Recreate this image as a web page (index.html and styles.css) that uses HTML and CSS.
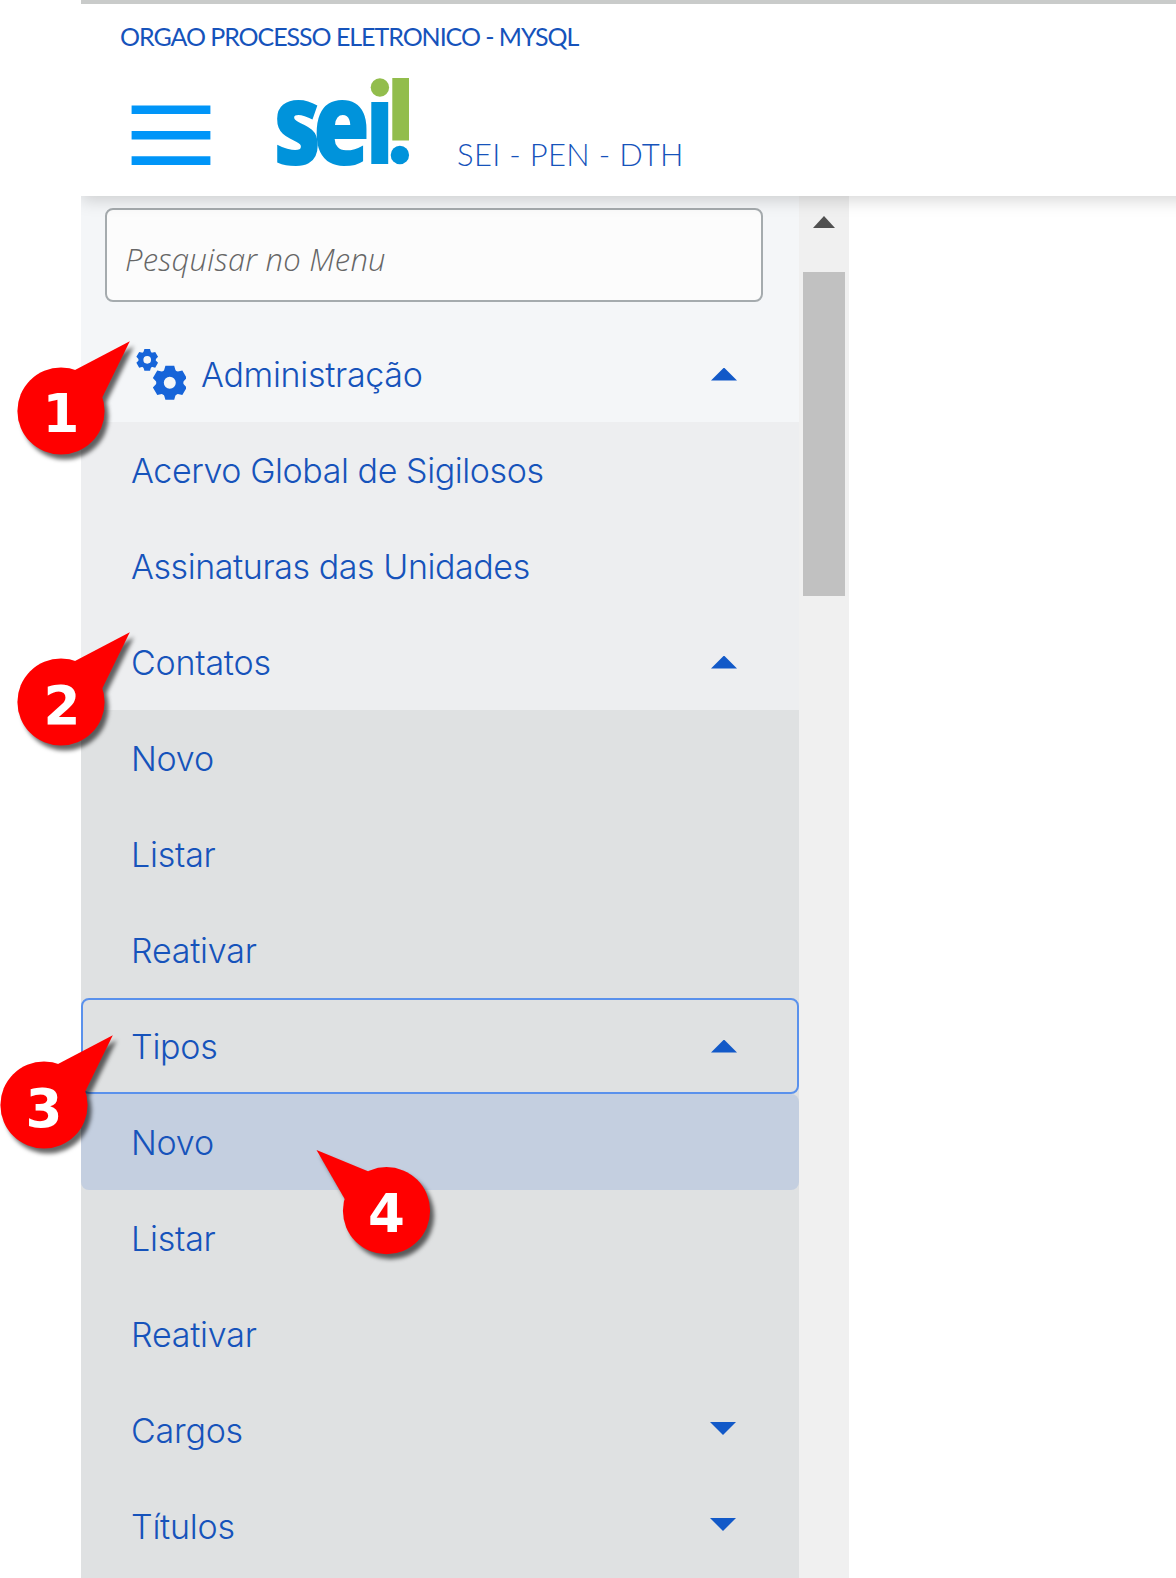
FILE: index.html
```html
<!DOCTYPE html>
<html lang="pt-BR">
<head>
<meta charset="utf-8">
<title>SEI - PEN - DTH</title>
<link rel="stylesheet" href="styles.css">
</head>
<body>
<div class="app">
  <header class="header">
    <div class="org">ORGAO PROCESSO ELETRONICO - MYSQL</div>
    <div class="brand">
      <svg class="burger" viewBox="0 0 79 62" width="79" height="62">
        <path fill="#0095f8" d="M-.4 1.4H78.4V10H-.4zM-.4 27H78.4V35.6H-.4zM-.4 52.3H78.4V61H-.4z"/>
      </svg>
      <svg class="logo" viewBox="0 0 134 92" width="134" height="92">
        <g fill="#0093db">
          <text class="logo-text" transform="translate(-2.8 89.3) scale(.81 1)">se</text>
          <path d="M95.3 26H112.2V88H95.3z"/>
          <circle cx="123.9" cy="79" r="9.2"/>
        </g>
        <g fill="#92bd4c">
          <circle cx="103.9" cy="11.5" r="9.2"/>
          <path d="M116.3 2H133V64.4H116.3z"/>
        </g>
      </svg>
      <span class="system">SEI - PEN - DTH</span>
    </div>
  </header>
  <div class="body">
    <nav class="menu">
      <div class="search"><input class="search-input" type="text" placeholder="Pesquisar no Menu"></div>
      <a class="item root">
        <svg class="gears" viewBox="0 0 50 52" width="50" height="52">
          <defs>
            <g id="gear">
              <circle r="9.8" fill="none" stroke="#1664d9" stroke-width="7.6"/>
              <path id="teeth" fill="#1664d9" d="M-6-11.5L-4.4-17H4.4L6-11.5zM-6 11.5L-4.4 17H4.4L6 11.5z"/>
              <use href="#teeth" transform="rotate(60)"/>
              <use href="#teeth" transform="rotate(120)"/>
            </g>
          </defs>
          <use href="#gear" transform="translate(11.2 11.8) scale(.64)"/>
          <use href="#gear" transform="translate(33.8 34.8)"/>
        </svg>
        <span class="label admin">Administração</span><i class="caret up"></i>
      </a>
      <div class="level2">
        <a class="item"><span class="label long">Acervo Global de Sigilosos</span></a>
        <a class="item"><span class="label long">Assinaturas das Unidades</span></a>
        <a class="item"><span class="label">Contatos</span><i class="caret up"></i></a>
      </div>
      <div class="level3">
        <a class="item"><span class="label">Novo</span></a>
        <a class="item"><span class="label">Listar</span></a>
        <a class="item"><span class="label">Reativar</span></a>
        <a class="item focus"><span class="label">Tipos</span><i class="caret up"></i></a>
        <a class="item hover"><span class="label">Novo</span></a>
        <a class="item"><span class="label">Listar</span></a>
        <a class="item"><span class="label">Reativar</span></a>
        <a class="item"><span class="label">Cargos</span><i class="caret down"></i></a>
        <a class="item"><span class="label">Títulos</span><i class="caret down"></i></a>
      </div>
    </nav>
    <div class="scrollbar"><i class="arrow"></i><div class="thumb"></div></div>
  </div>
</div>

<svg class="callout one" viewBox="0 0 130 130" width="130" height="130">
  <g fill="red"><circle cx="44" cy="76" r="43.6"/><path d="M58 35L112.8 6.3 85 63 44 76z"/></g>
  <text x="44" y="97">1</text>
</svg>
<svg class="callout two" viewBox="0 0 130 130" width="130" height="130">
  <g fill="red"><circle cx="44" cy="76" r="43.6"/><path d="M58 35L112.8 6.3 85 63 44 76z"/></g>
  <text x="45" y="97.5">2</text>
</svg>
<svg class="callout three" viewBox="0 0 130 130" width="130" height="130">
  <g fill="red"><circle cx="44" cy="76" r="43.6"/><path d="M58 35L112.8 6.3 85 63 44 76z"/></g>
  <text x="44" y="97.5">3</text>
</svg>
<svg class="callout four" viewBox="0 0 130 130" width="130" height="130">
  <g fill="red"><circle cx="76.5" cy="70.7" r="43.6"/><path d="M6.5 10L58 31.3 76 70 34.7 59z"/></g>
  <text x="76.5" y="92">4</text>
</svg>
</body>
</html>
```
FILE: styles.css
```css
* { box-sizing: border-box; }

body {
  margin: 0;
  height: 1578px;
  overflow: hidden;
  position: relative;
  background: #fff;
  color: #1653bb;
}

.app {
  margin-left: 81px;
  height: 1578px;
  overflow: hidden;
  display: flex;
  flex-direction: column;
}

.header {
  flex: none;
  height: 196px;
  margin-right: -30px;
  border-top: 4px solid #c9cbca;
  background: #fff;
  box-shadow: 0 4px 16px rgba(0, 0, 0, .17);
  position: relative;
  z-index: 1;
  font-family: Lato, sans-serif;
  font-weight: 300;
}

.org {
  padding: 17px 0 0 39px;
  font-size: 25px;
  font-weight: 400;
  line-height: 30px;
  letter-spacing: -1.05px;
}

.brand {
  display: flex;
  align-items: flex-end;
  padding: 25px 0 0 51px;
}

.burger { margin-bottom: 2px; overflow: visible; }
.logo { margin-left: 65px; overflow: visible; }
.logo-text {
  font: 800 115px "Open Sans", sans-serif;
  letter-spacing: -10.6px;
}

.system {
  margin-left: 47px;
  font-size: 31px;
  line-height: 28px;
  letter-spacing: .3px;
}

.body { flex: 1; display: flex; min-height: 0; }

.menu {
  width: 718px;
  overflow: hidden;
  background: #f4f6f8;
  font: 300 34px/40px Inter, sans-serif;
}

.search { height: 130px; padding: 12px 0 0 24px; }

.search-input {
  display: block;
  width: 658px;
  height: 94px;
  padding: 7px 20px 0 18px;
  border: 2px solid #a5abae;
  border-radius: 8px;
  background: #fcfcfc;
  font: italic 300 31px "Open Sans", sans-serif;
  letter-spacing: .22px;
  color: #666;
}
.search-input::placeholder { color: #666; opacity: 1; }

.item {
  display: flex;
  align-items: center;
  height: 96px;
  padding: 0 62px 0 50px;
}
.root { padding-left: 55px; }
.gears { margin-right: 15px; }
.label { padding-top: 1px; letter-spacing: -.22px; }
.admin { letter-spacing: -.3px; }
.long { letter-spacing: -.42px; }

.level2 { background: #edeef0; }
.level3 { background: #dfe1e2; height: 868px; }

.focus {
  border: 2px solid #5a91ec;
  border-radius: 8px;
  padding: 0 60px 0 48px;
}
.hover { background: #c4cfe0; border-radius: 8px; }

.caret {
  margin-left: auto;
  width: 26px;
  height: 13px;
  background: #1259c8;
}
.up { clip-path: polygon(50% 0, 100% 100%, 0 100%); }
.down { clip-path: polygon(0 0, 100% 0, 50% 100%); margin-right: 1px; margin-bottom: 3px; }

.scrollbar {
  width: 50px;
  padding: 20px 4px 0;
  background: #f0f0f0;
}
.arrow {
  display: block;
  width: 22px;
  height: 12px;
  margin: 0 auto 44px 10px;
  background: #505050;
  clip-path: polygon(50% 0, 100% 100%, 0 100%);
}
.thumb { height: 324px; background: #c1c1c1; }

/* numbered markers lying over the page */
.callout { position: absolute; overflow: visible; }
.callout g { filter: drop-shadow(4px 5px 2px rgba(0, 0, 0, .6)); }
.callout text {
  font: bold 53px "DejaVu Sans", sans-serif;
  fill: #fff;
  text-anchor: middle;
}
.one { left: 17px; top: 335px; }
.two { left: 17px; top: 626px; }
.three { left: -.5px; top: 1029px; }
.four { left: 310px; top: 1140px; }
```
